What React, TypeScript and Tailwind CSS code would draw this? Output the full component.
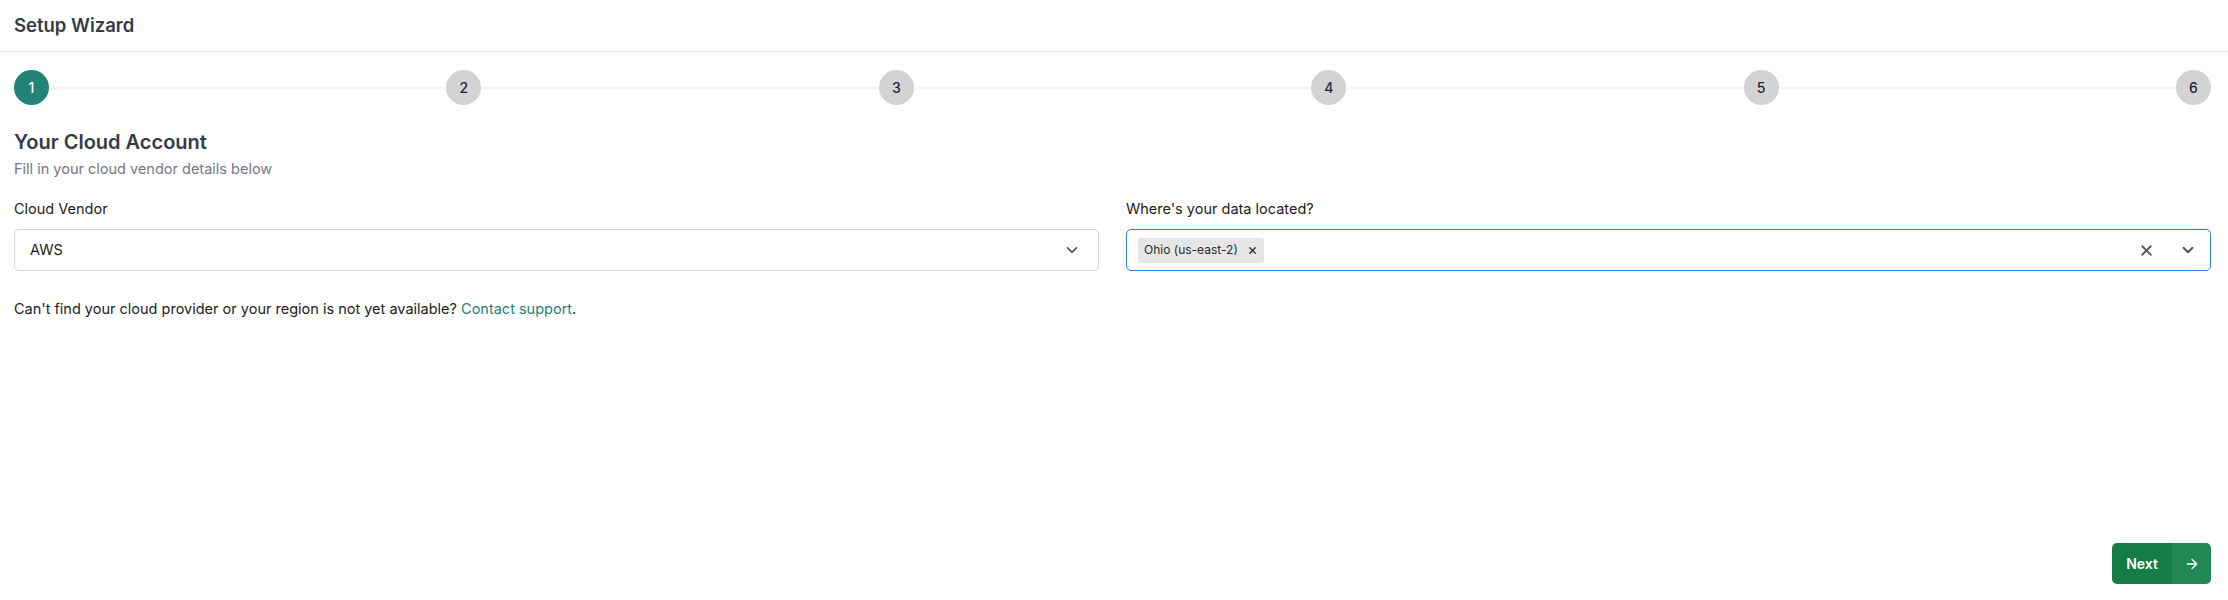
import { ChevronDown, X, ArrowRight } from 'lucide-react';

const steps = [1, 2, 3, 4, 5, 6];

function Stepper({ active }: { active: number }) {
  return (
    <div className="flex items-center mt-[18px]">
      {steps.map((s, i) => (
        <div key={s} className={i === 0 ? 'flex items-center' : 'flex items-center flex-1'}>
          {i > 0 && <div className="flex-1 h-[2px] bg-[#f3f3f8]" />}
          <div
            className={
              s === active
                ? 'w-[35px] h-[35px] rounded-full bg-[#238377] text-white flex items-center justify-center text-[14px] font-medium'
                : 'w-[35px] h-[35px] rounded-full bg-[#d3d3d3] text-[#24243a] flex items-center justify-center text-[14px] font-medium'
            }
          >
            {s}
          </div>
        </div>
      ))}
    </div>
  );
}

export default function App() {
  return (
    <div className="min-h-screen flex flex-col bg-white font-['Inter',sans-serif] text-[#1c1c1c]">
      {/* header */}
      <div className="h-[52px] border-b border-[#e6e6e8] flex items-center pl-[14px]">
        <h1 className="text-[18.5px] font-semibold text-[#363b45]">Setup Wizard</h1>
      </div>

      <div className="pl-[14px] pr-[17px] flex flex-col flex-1">
        <Stepper active={1} />

        {/* section title */}
        <div className="mt-[24px]">
          <h2 className="text-[20px] leading-[26px] font-semibold text-[#363b45]">Your Cloud Account</h2>
          <p className="text-[14.5px] leading-[20px] text-[#75758a] mt-[4px]">Fill in your cloud vendor details below</p>
        </div>

        {/* fields */}
        <div className="grid grid-cols-2 gap-[27px] mt-[20px]">
          <div>
            <label className="block text-[14.5px] leading-[20px] mb-[10px]">Cloud Vendor</label>
            <div className="h-[42px] border border-[#d2d5da] rounded-[5px] flex items-center pl-[15px] pr-[17px]">
              <span className="flex-1 text-[14.5px]">AWS</span>
              <ChevronDown className="w-[18px] h-[18px] text-[#3a3a3a]" strokeWidth={2} />
            </div>
          </div>
          <div>
            <label className="block text-[14.5px] leading-[20px] mb-[10px]">Where's your data located?</label>
            <div className="h-[42px] border border-[#2f80ed] rounded-[5px] flex items-center pl-[11px] pr-[13px]">
              <div className="flex-1 flex">
                <span className="h-[25px] bg-[#e6e6e6] rounded-[3px] flex items-center pl-[6px] pr-[6px] gap-[9px] text-[12px] text-[#2b2b2b]">
                  Ohio (us-east-2)
                  <X className="w-[11px] h-[11px]" strokeWidth={3} />
                </span>
              </div>
              <X className="w-[17px] h-[17px] text-[#555555]" strokeWidth={2.5} />
              <div className="w-[24px]" />
              <ChevronDown className="w-[18px] h-[18px] text-[#555555]" strokeWidth={2.5} />
            </div>
          </div>
        </div>

        <p className="text-[14.5px] leading-[20px] mt-[28px]">
          Can't find your cloud provider or your region is not yet available?{' '}
          <a className="text-[#1f7f74]">Contact support</a>.
        </p>

        {/* footer */}
        <div className="mt-auto flex justify-end pb-[16px]">
          <button className="h-[41px] flex rounded-[5px] overflow-hidden text-white">
            <span className="w-[60px] bg-[#157c44] flex items-center justify-center text-[14px] font-semibold">Next</span>
            <span className="w-[39px] bg-[#218856] flex items-center justify-center">
              <ArrowRight className="w-[16px] h-[16px]" strokeWidth={2} />
            </span>
          </button>
        </div>
      </div>
    </div>
  );
}
